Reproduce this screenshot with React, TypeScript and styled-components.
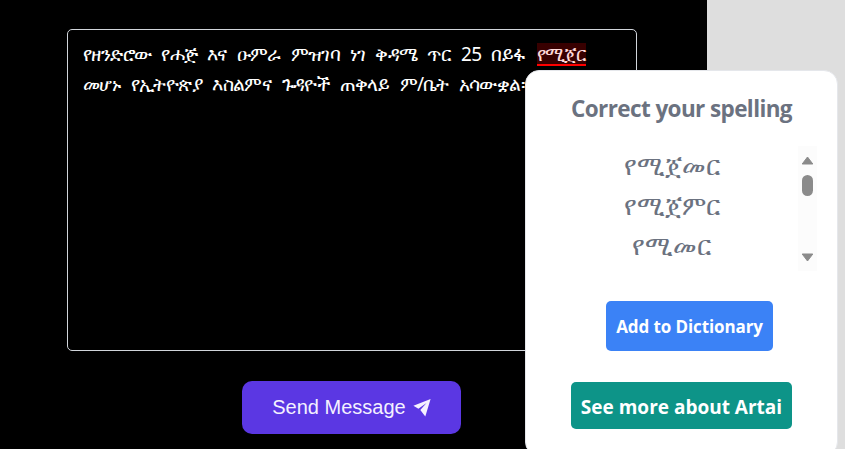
import React from "react";
import styled, { createGlobalStyle } from "styled-components";

const Global = createGlobalStyle`
  * { box-sizing: border-box; }
  body { margin: 0; overflow: hidden; background: #dedede; }
`;

const Page = styled.div`
  position: relative;
  height: 449px;
  overflow: hidden;
`;

const Panel = styled.main`
  display: flex;
  flex-direction: column;
  align-items: flex-start;
  width: 707px;
  height: 449px;
  padding-top: 29px;
  background: #000;
`;

const Editor = styled.div`
  width: 570px;
  height: 322px;
  margin-left: 67px;
  padding: 9px 15px;
  border: 1px solid #d1d5db;
  border-radius: 5px;
  color: #fff;
  font: 19px/30px "Noto Sans", sans-serif;
  letter-spacing: -0.6px;
`;

const Line = styled.div<{ $gap: number }>`
  height: 30px;
  white-space: nowrap;
  word-spacing: ${(p) => p.$gap}px;
`;

const Misspelled = styled.span`
  display: inline-block;
  height: 23px;
  margin-left: 3px;
  line-height: 22px;
  letter-spacing: -1.1px;
  border-bottom: 2px solid #f00;
  background: #380000;
  color: #ffd9d9;
`;

const SendButton = styled.button`
  display: flex;
  align-items: center;
  justify-content: center;
  gap: 7px;
  width: 219px;
  height: 53px;
  margin: 30px 0 0 242px;
  padding: 0;
  border: 0;
  border-radius: 10px;
  background: #5b37e3;
  color: #f4f1ff;
  font: 20px "Liberation Sans", Arial, sans-serif;
`;

const Popup = styled.aside`
  position: absolute;
  left: 525px;
  top: 70px;
  display: flex;
  flex-direction: column;
  align-items: center;
  width: 313px;
  height: 386px;
  border-radius: 14px;
  border: 1px solid #e5e7eb;
  background: #fff;
  color: #6b7280;
  font-family: "Open Sans", "Noto Sans", sans-serif;
`;

const Title = styled.h2`
  margin: 22px 0 0;
  font-size: 22.5px;
  line-height: 32px;
  font-weight: 700;
  letter-spacing: -0.6px;
  white-space: nowrap;
`;

const Suggestions = styled.div`
  display: flex;
  align-self: stretch;
  height: 125px;
  margin: 21px 20px 0 20px;
`;

const List = styled.ul`
  flex: 1;
  margin: -1px 0 0;
  padding: 0 1px 0 0;
  overflow: hidden;
  list-style: none;
  text-align: center;
  font: 26px/40px "Noto Sans", sans-serif;
`;

const Track = styled.div`
  display: flex;
  flex-direction: column;
  align-items: center;
  width: 19px;
  padding: 10px 0 9px;
  background: #fcfcfc;
  color: #8b8b8b;
`;

const Thumb = styled.div`
  width: 11px;
  height: 21px;
  margin: 10px 0 auto;
  border-radius: 6px;
  background: #8b8b8b;
`;

const ActionButton = styled.button<{ $tone: "blue" | "teal" }>`
  width: ${(p) => (p.$tone === "blue" ? 167 : 221)}px;
  height: ${(p) => (p.$tone === "blue" ? 50 : 47)}px;
  margin: ${(p) => (p.$tone === "blue" ? "30px 0 0 16px" : "31px 0 0")};
  padding: ${(p) => (p.$tone === "blue" ? "1px 0 0" : "3px 0 0")};
  border: 0;
  border-radius: 5px;
  background: ${(p) => (p.$tone === "blue" ? "#3b82f6" : "#0d9488")};
  color: #fff;
  font-family: "Open Sans", sans-serif;
  font-size: ${(p) => (p.$tone === "blue" ? 17 : 19)}px;
  font-weight: 700;
  letter-spacing: ${(p) => (p.$tone === "blue" ? "-0.1px" : "0")};
  white-space: nowrap;
`;

const ArrowIcon = styled.svg`
  flex: none;
  width: 13px;
  height: 9px;
`;

const Arrow = ({ down = false }: { down?: boolean }) => (
  <ArrowIcon viewBox="0 0 13 9">
    <path
      d={down ? "M1.2 1h10.6L6.5 8z" : "M6.5 1l5.3 7H1.2z"}
      fill="currentColor"
      stroke="currentColor"
      strokeLinejoin="round"
    />
  </ArrowIcon>
);

export default function App() {
  return (
    <Page>
      <Global />
      <Panel>
        <Editor>
          <Line $gap={5.4}>
            የዘንድሮው የሐጅ እና ዑምራ ምዝገባ ነገ ቅዳሜ ጥር 25 በይፋ <Misspelled>የሚጀር</Misspelled>
          </Line>
          <Line $gap={6}>መሆኑ የኢትዮጵያ እስልምና ጉዳዮች ጠቅላይ ም/ቤት አሳውቋል።</Line>
        </Editor>
        <SendButton>
          Send Message
          <svg width="18" height="18" viewBox="0 0 18 18" fill="currentColor">
            <path d="M17.6 0L.4 6.7l5 3L13.5 4 7.3 11l5 6.5z" />
          </svg>
        </SendButton>
      </Panel>
      <Popup>
        <Title>Correct your spelling</Title>
        <Suggestions>
          <List>
            <li>የሚጀመር</li>
            <li>የሚጀምር</li>
            <li>የሚመር</li>
          </List>
          <Track>
            <Arrow />
            <Thumb />
            <Arrow down />
          </Track>
        </Suggestions>
        <ActionButton $tone="blue">Add to Dictionary</ActionButton>
        <ActionButton $tone="teal">See more about Artai</ActionButton>
      </Popup>
    </Page>
  );
}
